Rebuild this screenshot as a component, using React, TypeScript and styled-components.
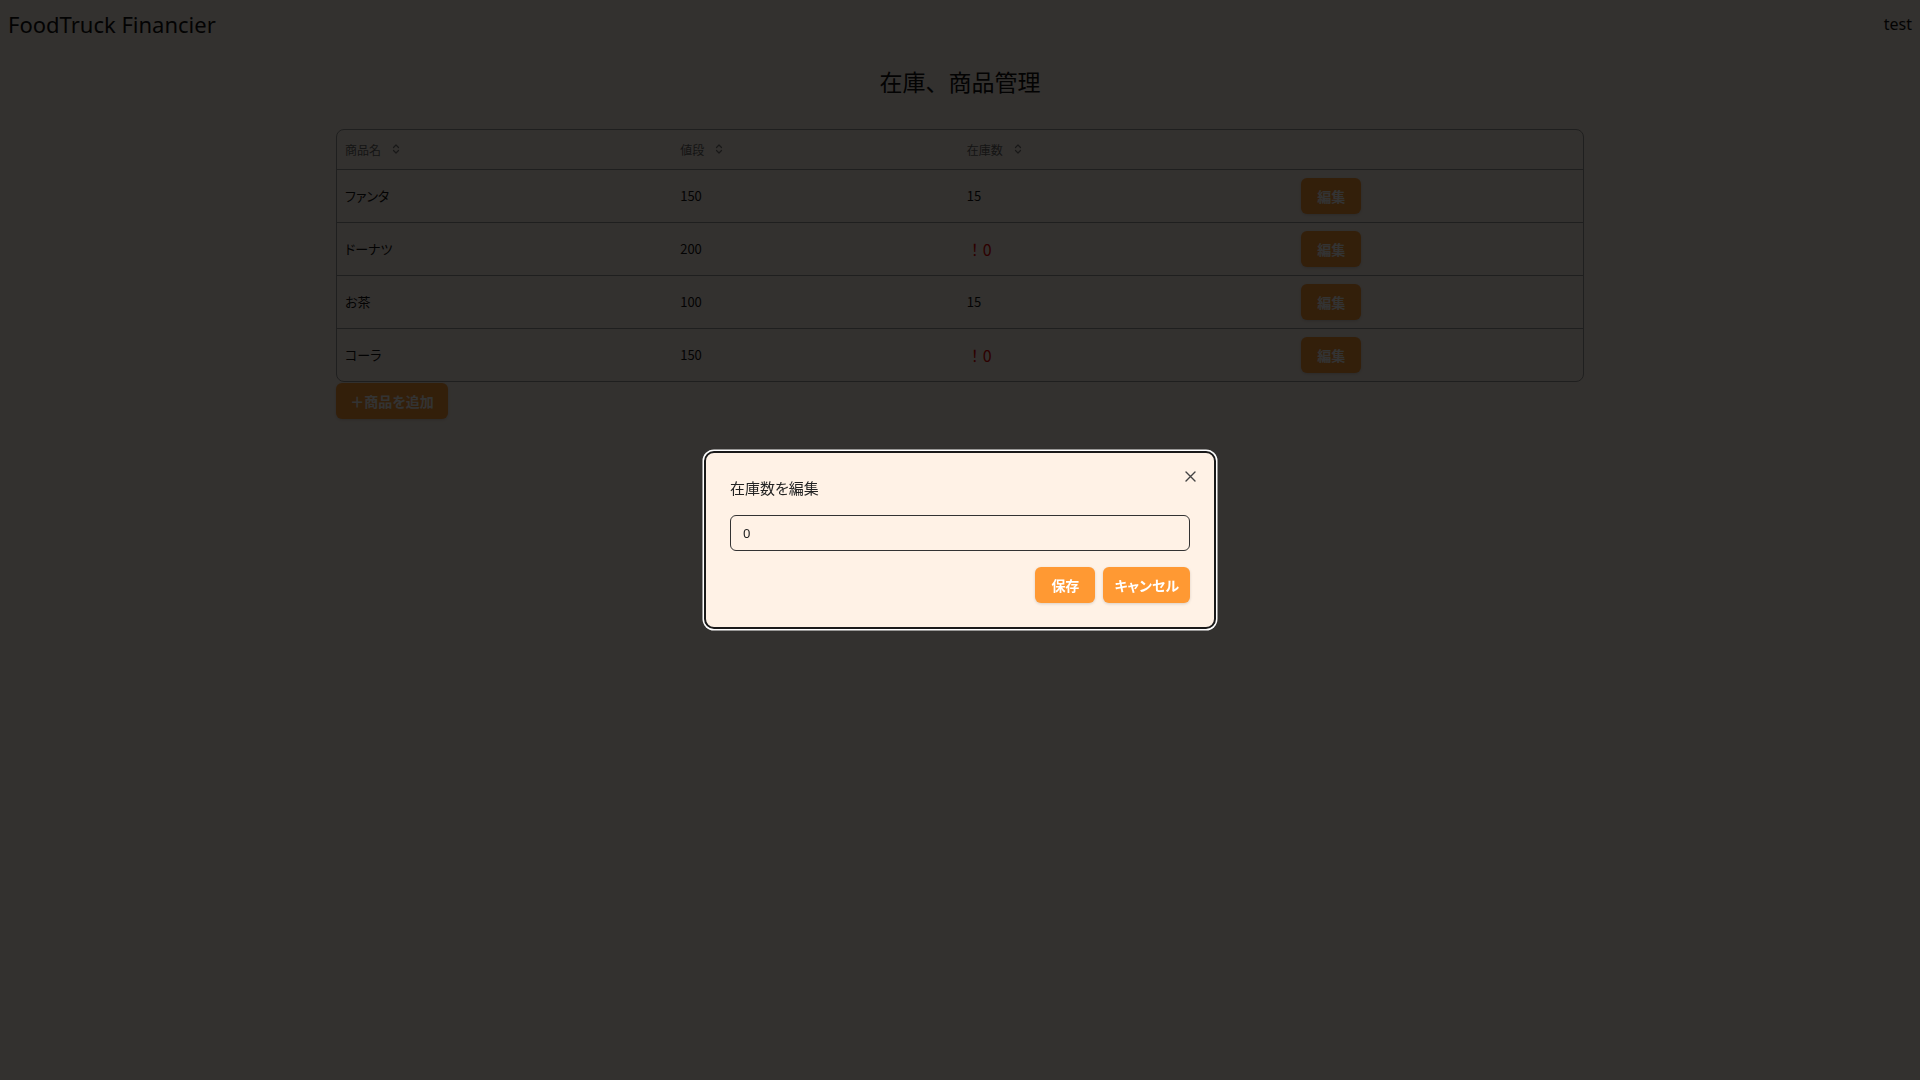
import React, { useState } from "react";
import styled, { createGlobalStyle } from "styled-components";

const GlobalStyle = createGlobalStyle`
  html, body {
    margin: 0;
    padding: 0;
    background: #fff3e8;
    font-family: "Noto Sans", "Noto Sans CJK JP", sans-serif;
    color: #111;
  }
  * { box-sizing: border-box; }
`;

const Page = styled.div`
  min-height: 100vh;
  background: #fff3e8;
`;

const TopBar = styled.header`
  display: flex;
  align-items: center;
  justify-content: space-between;
  height: 48px;
  padding: 0 8px;
`;

const Brand = styled.div`
  font-size: 22px;
  line-height: 32px;
  color: #111;
`;

const User = styled.div`
  font-size: 16px;
  color: #111;
`;

const Title = styled.h1`
  margin: 17px 0 32px;
  text-align: center;
  font-size: 23px;
  line-height: 32px;
  font-weight: 400;
  font-family: "Noto Sans CJK JP", sans-serif;
`;

const Section = styled.section`
  width: 65%;
  margin: 0 auto;
`;

const TableFrame = styled.div`
  border: 1px solid #999;
  border-radius: 8px;
  overflow: hidden;
`;

const Table = styled.table`
  width: 100%;
  border-collapse: collapse;
  table-layout: fixed;
  font-family: "Noto Sans CJK JP", sans-serif;
  font-feature-settings: "palt";
`;

const HeadCell = styled.th`
  text-align: left;
  font-weight: 400;
  font-size: 12px;
  color: #666;
  height: 39px;
  padding: 0 8px;
`;

const HeadInner = styled.span`
  display: inline-flex;
  align-items: center;
  gap: 11px;
`;

const Row = styled.tr`
  border-top: 1px solid #999;
`;

const Cell = styled.td`
  height: 52px;
  padding: 8px 8px;
  font-size: 13px;
  color: #111;
  vertical-align: middle;
`;

const Warn = styled.span`
  color: #e30000;
  font-size: 16px;
  font-feature-settings: normal;
`;

const OrangeButton = styled.button<{ $pad?: number }>`
  height: 36px;
  padding: 0 ${(p) => p.$pad ?? 16}px;
  border: none;
  border-radius: 6px;
  background: #ff9933;
  color: #fff;
  font-family: "Noto Sans CJK JP", sans-serif;
  font-feature-settings: "palt";
  font-weight: 700;
  font-size: 14px;
  box-shadow: 0 1px 3px rgba(0, 0, 0, 0.15);
  cursor: pointer;
`;

const AddButton = styled(OrangeButton)`
  margin-top: 1px;
  width: 112px;
`;

const SortIcon = () => (
  <svg width="8" height="12" viewBox="0 0 8 12" fill="none" stroke="#777" strokeWidth="1.2" strokeLinecap="round" strokeLinejoin="round">
    <path d="M1.5 4.5 L4 2 L6.5 4.5" />
    <path d="M1.5 7.5 L4 10 L6.5 7.5" />
  </svg>
);

const Overlay = styled.div`
  position: fixed;
  inset: 0;
  background: rgba(0, 0, 0, 0.8);
  display: flex;
  align-items: center;
  justify-content: center;
`;

const Dialog = styled.div`
  position: relative;
  width: 512px;
  background: #fff2e6;
  border: 2px solid #1a1a1a;
  border-radius: 10px;
  box-shadow: 0 0 0 1.5px #ffffff;
  padding: 24px;
  font-family: "Noto Sans CJK JP", sans-serif;
  font-feature-settings: "palt";
`;

const DialogTitle = styled.h2`
  margin: 0 0 16px;
  font-size: 15px;
  line-height: 22px;
  font-weight: 400;
  color: #222;
`;

const CloseButton = styled.button`
  position: absolute;
  top: 14px;
  right: 15px;
  width: 18px;
  height: 18px;
  padding: 0;
  border: none;
  background: transparent;
  display: flex;
  align-items: center;
  justify-content: center;
  cursor: pointer;
`;

const Input = styled.input`
  display: block;
  width: 100%;
  height: 36px;
  padding: 0 12px;
  border: 1px solid #333;
  border-radius: 6px;
  background: transparent;
  font-family: "Noto Sans", sans-serif;
  font-size: 13px;
  color: #222;
  outline: none;
`;

const Actions = styled.div`
  display: flex;
  justify-content: flex-end;
  gap: 8px;
  margin-top: 16px;
`;

const items = [
  { name: "ファンタ", price: 150, stock: 15 },
  { name: "ドーナツ", price: 200, stock: 0 },
  { name: "お茶", price: 100, stock: 15 },
  { name: "コーラ", price: 150, stock: 0 },
];

export default function App() {
  const [value, setValue] = useState("0");
  return (
    <>
      <GlobalStyle />
      <Page>
        <TopBar>
          <Brand>FoodTruck Financier</Brand>
          <User>test</User>
        </TopBar>
        <Title>在庫、商品管理</Title>
        <Section>
          <TableFrame>
            <Table>
              <colgroup>
                <col style={{ width: "26.9%" }} />
                <col style={{ width: "23%" }} />
                <col style={{ width: "26.85%" }} />
                <col style={{ width: "23.25%" }} />
              </colgroup>
              <thead>
                <tr>
                  <HeadCell><HeadInner>商品名<SortIcon /></HeadInner></HeadCell>
                  <HeadCell><HeadInner>値段<SortIcon /></HeadInner></HeadCell>
                  <HeadCell><HeadInner>在庫数<SortIcon /></HeadInner></HeadCell>
                  <HeadCell />
                </tr>
              </thead>
              <tbody>
                {items.map((it) => (
                  <Row key={it.name}>
                    <Cell>{it.name}</Cell>
                    <Cell>{it.price}</Cell>
                    <Cell>{it.stock === 0 ? <Warn>！0</Warn> : it.stock}</Cell>
                    <Cell><OrangeButton>編集</OrangeButton></Cell>
                  </Row>
                ))}
              </tbody>
            </Table>
          </TableFrame>
          <AddButton $pad={14}>＋商品を追加</AddButton>
        </Section>
      </Page>
      <Overlay>
        <Dialog>
          <CloseButton aria-label="close">
            <svg width="11" height="11" viewBox="0 0 11 11" stroke="#444" strokeWidth="1.4" strokeLinecap="round">
              <path d="M1 1 L10 10 M10 1 L1 10" />
            </svg>
          </CloseButton>
          <DialogTitle>在庫数を編集</DialogTitle>
          <Input value={value} onChange={(e) => setValue(e.target.value)} />
          <Actions>
            <OrangeButton>保存</OrangeButton>
            <OrangeButton $pad={11}>キャンセル</OrangeButton>
          </Actions>
        </Dialog>
      </Overlay>
    </>
  );
}
